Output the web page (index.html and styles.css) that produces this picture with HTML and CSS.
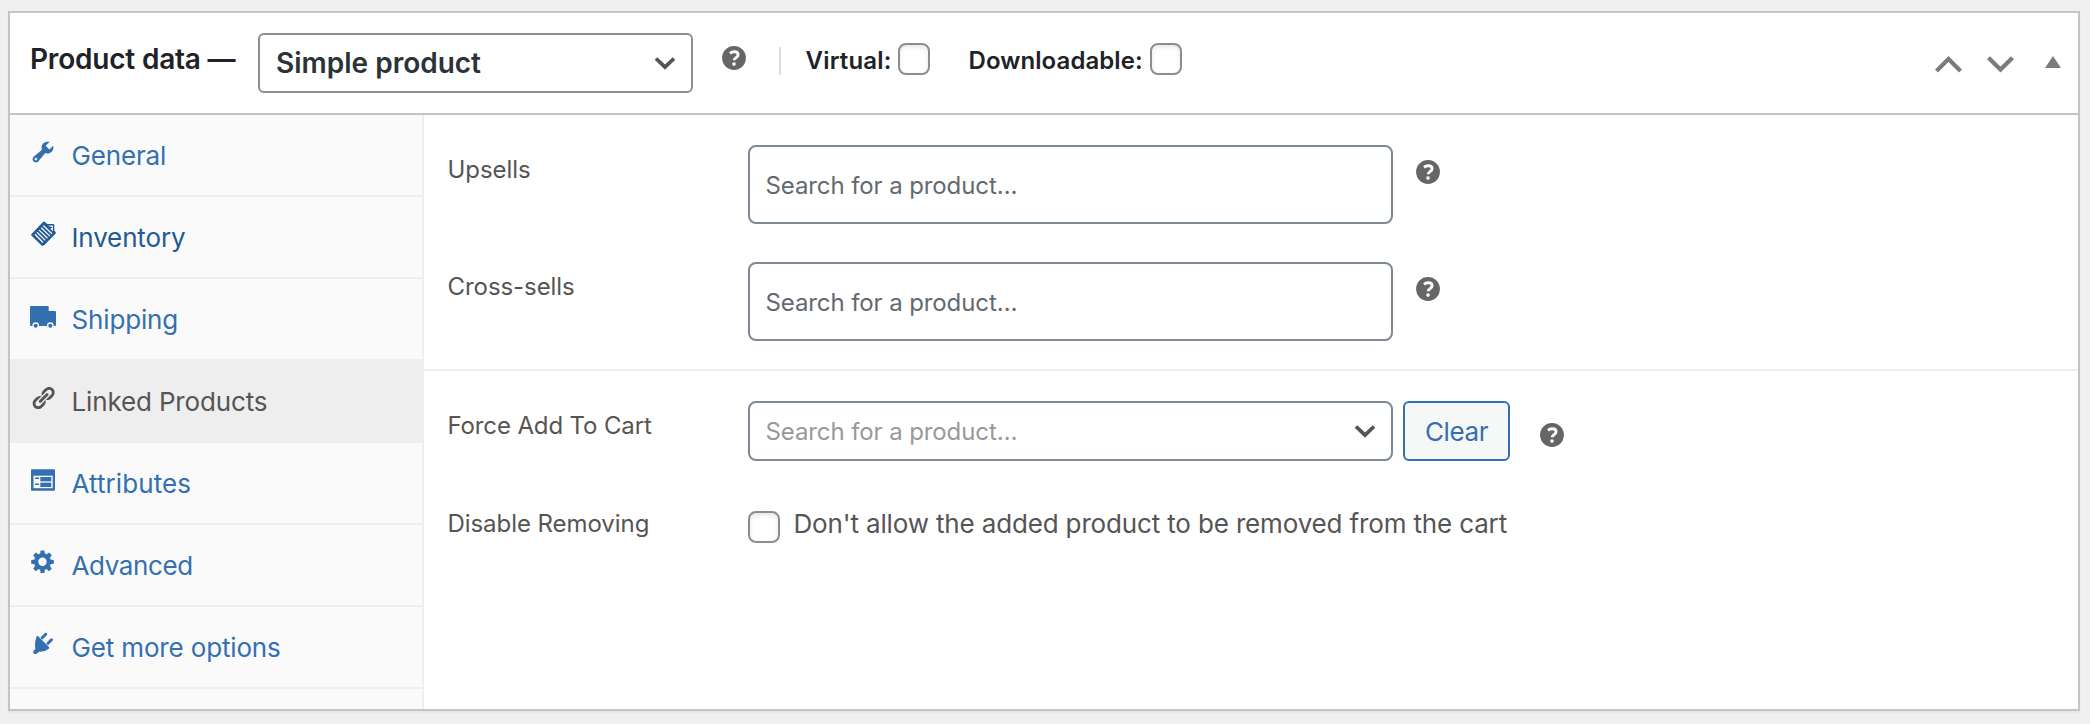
FILE: index.html
```html
<!DOCTYPE html>
<html lang="en">
<head>
<meta charset="utf-8">
<title>Product data</title>
<link rel="stylesheet" href="styles.css">
</head>
<body>
<svg class="defs" aria-hidden="true">
  <symbol id="help" viewBox="0 0 24 24">
    <circle cx="12" cy="12" r="11.900"/>
    <path d="M8 7.300C9.300 6.200 10.700 5.800 12.200 5.800c2.600 0 3.900 1.100 3.900 2.900 0 2.900-3.800 2.900-3.900 5.600" fill="none" stroke="#fff" stroke-width="2.900"/>
    <circle cx="12" cy="18.100" r="1.800" fill="#fff"/>
  </symbol>
  <symbol id="chevron" viewBox="0 0 22 13">
    <path d="M2 1.500 11 10.200 20 1.500" fill="none" stroke="currentColor" stroke-width="3.800"/>
  </symbol>
</svg>
<main class="panel">
  <header class="head">
    <h2 class="title">Product data —</h2>
    <div class="select select-type"><span>Simple product</span><svg class="chev"><use href="#chevron"/></svg></div>
    <svg class="help help-head"><use href="#help"/></svg>
    <span class="divider"></span>
    <label class="opt opt-virtual"><span>Virtual:</span><span class="check"></span></label>
    <label class="opt opt-download"><span>Downloadable:</span><span class="check"></span></label>
    <div class="handles">
      <svg width="27" height="17" viewBox="0 0 27 17"><path d="M1.500 15 13.500 3 25.500 15" fill="none" stroke="currentColor" stroke-width="4.200"/></svg>
      <svg width="27" height="17" viewBox="0 0 27 17"><path d="M1.500 1.700 13.500 13.500 25.500 1.700" fill="none" stroke="currentColor" stroke-width="4.200"/></svg>
      <svg class="toggle" width="16" height="17" viewBox="0 0 16 17"><path d="M8 0 16 12H0z" fill="currentColor"/></svg>
    </div>
  </header>
  <div class="body">
    <nav class="tabs">
      <a class="tab"><svg class="icon" viewBox="0 0 20 20"><path fill="currentColor" d="M16.680 9.770c-1.340 1.340-3.300 1.670-4.950.99l-5.410 6.520c-.99.99-2.590.99-3.580 0s-.99-2.590 0-3.570l6.520-5.420c-.68-1.650-.35-3.610.99-4.950 1.280-1.280 3.120-1.620 4.720-1.060l-2.890 2.890 2.820 2.820 2.860-2.870c.53 1.580.18 3.390-1.080 4.650zM3.810 16.210c.4.390 1.040.390 1.430 0 .4-.4.4-1.040 0-1.430-.39-.4-1.030-.4-1.430 0-.39.390-.39 1.030 0 1.430z"/></svg><span>General</span></a>
      <a class="tab hover"><svg class="icon" viewBox="0 0 26 26"><path fill="currentColor" d="M1.300 13.300 12.800 1.200Q14 0 15.200 1.200L17.300 3H23Q24.300 3 24.300 4.300V9.600L25.600 11Q26.300 12 25.300 13L13.800 24.400Q12.700 25.200 11.600 24.400L1.400 14.400Q.8 13.800 1.300 13.300z"/><path d="M18.300 4.400H22.900V10.200L21.500 9z" fill="#fafafa"/><path d="M20 4.500V8.200M18.600 6.500H22" stroke="currentColor" stroke-width="1"/><path d="M13.300 4.500 21.900 12.800M11.200 6.800 19.800 15.100M9.100 9.100 17.500 17.300M7 11.200 15.300 19.400M4.900 13.300 13 21.500" stroke="#fafafa" stroke-width="1.250"/></svg><span>Inventory</span></a>
      <a class="tab"><svg class="icon" viewBox="0 0 26 26"><path fill="currentColor" d="M1 3H17.700Q18.700 3 18.700 4V8H25Q26 8 26 9V22Q26 23 25 23H1Q0 23 0 22V4Q0 3 1 3z"/><g fill="currentColor" stroke="#fafafa" stroke-width="1.300"><circle cx="5.700" cy="22.700" r="2.700"/><circle cx="20.300" cy="22.700" r="2.700"/></g></svg><span>Shipping</span></a>
      <a class="tab active"><svg class="icon" viewBox="0 0 20 20"><path fill="currentColor" d="M17.740 2.760c1.680 1.690 1.680 4.410 0 6.100l-1.530 1.520c-1.120 1.120-2.700 1.470-4.140 1.090l2.620-2.610.76-.77.76-.76c.84-.84.84-2.200 0-3.040-.84-.85-2.200-.85-3.040 0l-.77.76-3.380 3.380c-.37-1.440-.02-3.020 1.100-4.140l1.520-1.530c1.690-1.680 4.420-1.680 6.100 0zM8.590 13.430l5.340-5.340c.42-.42.42-1.100 0-1.520-.44-.43-1.130-.39-1.530 0l-5.330 5.340c-.42.420-.42 1.100 0 1.520.44.430 1.130.39 1.520 0zm-.76 2.290l4.140-4.150c.38 1.440.03 3.020-1.090 4.140l-1.520 1.530c-1.690 1.680-4.410 1.680-6.100 0-1.680-1.680-1.680-4.420 0-6.100l1.530-1.520c1.120-1.120 2.700-1.470 4.140-1.100l-4.140 4.150c-.85.840-.85 2.200 0 3.050.84.840 2.200.84 3.040 0z"/></svg><span>Linked Products</span></a>
      <a class="tab attributes"><svg class="icon" viewBox="0 0 26 26"><rect x="1" y="2.200" width="24" height="21.500" rx="1" fill="currentColor"/><path fill="#fafafa" d="M3.500 8.700H22.700V21.200H3.500z"/><path fill="currentColor" opacity=".35" d="M10.300 14H21.300V16H10.300z"/><path fill="currentColor" d="M5 10.500H9V12H5zM5 16.500H9V18H5zM10.300 10H21.300V14H10.300zM10.300 16H21.300V20H10.300z"/></svg><span>Attributes</span></a>
      <a class="tab advanced"><svg class="icon" viewBox="0 0 26 26"><g fill="currentColor" transform="translate(12.500 12.800)"><path fill-rule="evenodd" d="M-8.500 0a8.500 8.500 0 1 0 17 0a8.500 8.500 0 1 0-17 0zM-4.200 0a4.200 4.200 0 1 1 8.400 0a4.200 4.200 0 1 1-8.400 0z"/><path id="tooth" d="M-2.400-7.500-1.900-11.300H1.900L2.400-7.500zM-2.400 7.500-1.900 11.300H1.900L2.400 7.500z"/><use href="#tooth" transform="rotate(45)"/><use href="#tooth" transform="rotate(90)"/><use href="#tooth" transform="rotate(135)"/></g></svg><span>Advanced</span></a>
      <a class="tab"><svg class="icon" viewBox="0 0 26 26"><path fill="currentColor" d="M6.800 5.300Q7.300 4.500 8.200 5.200L19 16Q19.700 17 18.700 17.700 14.500 21.300 9 20.700L7 22.400Q5.500 23.600 4 22.800 2.600 21.300 3.500 20L5.300 18Q4.300 10.800 6.800 5.300z"/><path d="M12.200 6.800 15.700 3.300M18 12.300 21.500 8.800" stroke="currentColor" stroke-width="3" stroke-linecap="round"/></svg><span>Get more options</span></a>
    </nav>
    <section class="form">
      <div class="group group-linked">
        <div class="row row-tall"><span class="name">Upsells</span><div class="box">Search for a product…</div><svg class="help help-row"><use href="#help"/></svg></div>
        <div class="row row-tall"><span class="name">Cross-sells</span><div class="box">Search for a product…</div><svg class="help help-row"><use href="#help"/></svg></div>
      </div>
      <div class="group group-force">
        <div class="row row-force"><span class="name name-force">Force Add To Cart</span><div class="select select-product"><span>Search for a product…</span><svg class="chev"><use href="#chevron"/></svg></div><button class="clear">Clear</button><svg class="help help-force"><use href="#help"/></svg></div>
        <div class="row row-disable"><span class="name">Disable Removing</span><span class="check"></span><span class="desc">Don't allow the added product to be removed from the cart</span></div>
      </div>
    </section>
  </div>
</main>
</body>
</html>
```
FILE: styles.css
```css
* { box-sizing: border-box; }
body {
  margin: 0;
  height: 724px;
  padding: 11px 10px 13px 8px;
  overflow: hidden;
  background: #f0f0f0;
  font-family: Inter, "Liberation Sans", sans-serif;
  color: #555;
}
.defs { display: none; }
svg { display: block; flex: none; }
span { white-space: nowrap; }

.panel {
  height: 700px;
  border: 2px solid #c3c4c9;
  background: #fff;
  box-shadow: 0 2px 2px rgba(0, 0, 0, .04);
  display: flex;
  flex-direction: column;
}
.head {
  height: 102px;
  flex: none;
  border-bottom: 2px solid #c3c4c9;
  display: flex;
  align-items: flex-start;
  padding-left: 20px;
  color: #1d2327;
}
.title {
  margin: 0;
  padding-top: 30px;
  width: 228px;
  font-size: 28px;
  line-height: 33px;
  font-weight: 600;
  letter-spacing: -.2px;
}
.select {
  display: flex;
  align-items: center;
  justify-content: space-between;
  height: 60px;
  padding: 0 15px 0 16px;
  background: #fff;
}
.select-type {
  width: 435px;
  margin-top: 20px;
  border: 2px solid #8c8c94;
  border-radius: 6px;
  color: #2c3338;
  font-size: 28px;
  font-weight: 600;
}
.chev { width: 22px; height: 13px; color: #555; }
.help { width: 24px; height: 24px; fill: #666; }
.help-head { margin: 33px 0 0 28.500px; }
.divider { width: 2px; height: 28px; margin: 34px 24.500px 0 33.500px; background: #dcdcde; }
.opt {
  display: flex;
  justify-content: space-between;
  margin-top: 30px;
  font-size: 24px;
  line-height: 36px;
  font-weight: 600;
}
.opt-virtual { width: 124px; letter-spacing: .2px; }
.opt-download { width: 213px; margin-left: 39px; letter-spacing: .08px; }
.check {
  flex: none;
  width: 32px;
  height: 32px;
  border: 2px solid #8c8c94;
  border-radius: 8px;
  background: #fff;
  box-shadow: inset 0 2px 4px rgba(0, 0, 0, .1);
}
.handles {
  display: flex;
  gap: 25px;
  margin: 43px 17px 0 auto;
  color: #787c82;
}
.toggle { margin-left: 6px; }

.body { flex: 1; display: flex; min-height: 0; }
.tabs {
  width: 414px;
  flex: none;
  background: #fafafa;
  border-right: 2px solid #eee;
}
.tab {
  display: flex;
  height: 82px;
  padding: 24px 0 0 20px;
  gap: 15.500px;
  border-bottom: 2px solid #eee;
  color: #3470af;
  font-size: 26px;
  line-height: 34px;
  letter-spacing: -.15px;
}
.tab.hover { color: #235a93; }
.tab.active { background: #eee; color: #555; }
.tab.attributes { letter-spacing: .08px; }
.tab.advanced { letter-spacing: -.4px; }
.icon { width: 26px; height: 26px; }

.form { flex: 1; }
.group { padding-left: 23.500px; }
.group-linked { height: 256px; padding-top: 30px; border-bottom: 2px solid #eee; }
.group-force { padding-top: 30px; }
.row { display: flex; align-items: flex-start; }
.row-tall { height: 117px; }
.row-force { height: 110px; }
.name {
  width: 300.500px;
  flex: none;
  padding-top: 10px;
  font-size: 24px;
  line-height: 30px;
  letter-spacing: -.06px;
}
.name-force { letter-spacing: -.13px; }
.box, .select-product {
  width: 645px;
  padding-left: 15.500px;
  border: 2px solid #7e8993;
  border-radius: 8px;
  font-size: 24px;
  letter-spacing: -.1px;
}
.box { height: 79px; line-height: 77px; color: #646970; }
.select-product { color: #999; }
.help-row { margin: 15px 0 0 22.500px; }
.clear {
  width: 107px;
  height: 60px;
  margin-left: 10px;
  padding: 0;
  border: 2px solid #3470af;
  border-radius: 6px;
  background: #f6f7f7;
  color: #3470af;
  font: 26px Inter, "Liberation Sans", sans-serif;
  letter-spacing: -.4px;
}
.help-force { margin: 22px 0 0 29.500px; }
.row-disable .name { padding-top: 0; margin-top: -2px; }
.desc { margin-left: 13.500px; font-size: 26px; line-height: 26px; letter-spacing: -.15px; }
```
